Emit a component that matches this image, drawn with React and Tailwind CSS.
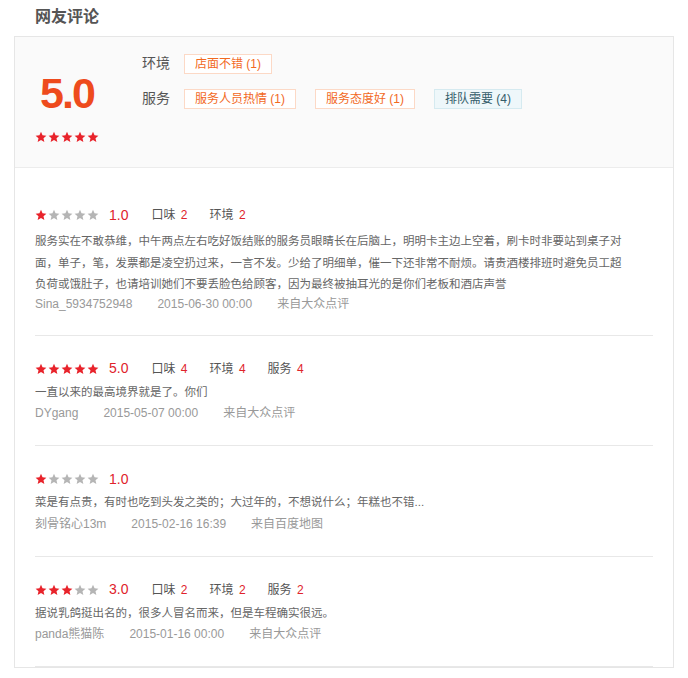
import React from "react";

const FONT = { fontFamily: '"Liberation Sans", Arial, "Noto Sans CJK SC", sans-serif' };

function Star({ on, size = 12 }) {
  return (
    <svg width={size} height={size} viewBox="0 0 24 24" className="block">
      <path
        d="M12 1.5l3.1 7.1 7.7.7-5.8 5.1 1.7 7.6L12 18l-6.7 4 1.7-7.6-5.8-5.1 7.7-.7z"
        fill={on ? "#e8232b" : "#b5b5b5"}
      />
    </svg>
  );
}

function Stars({ n, size = 12 }) {
  return (
    <div className="flex gap-[1px]">
      {[0, 1, 2, 3, 4].map((i) => (
        <Star key={i} on={i < n} size={size} />
      ))}
    </div>
  );
}

const reviews = [
  {
    stars: 1,
    score: "1.0",
    subs: [["口味", 2], ["环境", 2]],
    text: "服务实在不敢恭维，中午两点左右吃好饭结账的服务员眼睛长在后脑上，明明卡主边上空着，刷卡时非要站到桌子对面，单子，笔，发票都是凌空扔过来，一言不发。少给了明细单，催一下还非常不耐烦。请贵酒楼排班时避免员工超负荷或饿肚子，也请培训她们不要丢脸色给顾客，因为最终被抽耳光的是你们老板和酒店声誉",
    user: "Sina_5934752948",
    date: "2015-06-30 00:00",
    src: "来自大众点评",
    first: true,
  },
  {
    stars: 5,
    score: "5.0",
    subs: [["口味", 4], ["环境", 4], ["服务", 4]],
    text: "一直以来的最高境界就是了。你们",
    user: "DYgang",
    date: "2015-05-07 00:00",
    src: "来自大众点评",
  },
  {
    stars: 1,
    score: "1.0",
    subs: [],
    text: "菜是有点贵，有时也吃到头发之类的；大过年的，不想说什么；年糕也不错...",
    user: "刻骨铭心13m",
    date: "2015-02-16 16:39",
    src: "来自百度地图",
  },
  {
    stars: 3,
    score: "3.0",
    subs: [["口味", 2], ["环境", 2], ["服务", 2]],
    text: "据说乳鸽挺出名的，很多人冒名而来，但是车程确实很远。",
    user: "panda熊猫陈",
    date: "2015-01-16 00:00",
    src: "来自大众点评",
  },
];

function Tag({ children, blue }) {
  return (
    <span
      className={
        "inline-flex h-[20px] items-center px-[10px] text-[12px] border " +
        (blue
          ? "bg-[#eef7fa] border-[#d5eaf0] text-[#355d6a]"
          : "bg-white border-[#fcd9c6] text-[#f2691e]")
      }
    >
      {children}
    </span>
  );
}

export default function App() {
  return (
    <div className="w-[688px] h-[678px] bg-white overflow-hidden" style={FONT}>
      <div className="pl-[35px] pt-[6px] h-[36px] text-[16px] font-bold text-[#555] leading-[22px]">
        网友评论
      </div>
      <div className="ml-[14px] w-[660px] border border-[#e6e6e6]">
        <div className="h-[131px] bg-[#fafafa] border-b border-[#ececec] flex pl-[20px] pt-[16px]">
          <div className="w-[64px] flex flex-col items-center">
            <div className="text-[43px] leading-[42px] font-bold text-[#ee4b1d] mt-[19px] tracking-[-2px]">5.0</div>
            <div className="mt-[17px]">
              <Stars n={5} />
            </div>
          </div>
          <div className="ml-[43px] flex flex-col gap-[14px]">
            <div className="flex items-center">
              <span className="w-[42px] text-[14px] text-[#555]">环境</span>
              <Tag>店面不错 (1)</Tag>
            </div>
            <div className="flex items-center">
              <span className="w-[42px] text-[14px] text-[#555]">服务</span>
              <div className="flex gap-[19px]">
                <Tag>服务人员热情 (1)</Tag>
                <Tag>服务态度好 (1)</Tag>
                <Tag blue>排队需要 (4)</Tag>
              </div>
            </div>
          </div>
        </div>
        <div className="px-[20px] pt-[14px]">
          {reviews.map((r, i) => (
            <div key={i} className="py-[22px] border-b border-[#e8e8e8]">
              <div className="flex items-center h-[22px]">
                <Stars n={r.stars} />
                <span className="ml-[10px] text-[14px] text-[#e0232b]">{r.score}</span>
                <div className="flex ml-[23px] gap-[22px] text-[12px]">
                  {r.subs.map(([k, v]) => (
                    <span key={k} className="text-[#555]">
                      {k} <span className="text-[#e0232b] ml-[2px]">{v}</span>
                    </span>
                  ))}
                </div>
              </div>
              <div
                className={
                  "text-[11.5px] leading-[21.5px] text-[#666] pr-[26px] " +
                  (r.first ? "pt-[5px]" : "pt-[2px]")
                }
              >
                {r.text}
              </div>
              <div className={"flex items-center gap-[25px] text-[12px] text-[#999] " + (r.first ? "h-[17px]" : "h-[20px]")}>
                <span>{r.user}</span>
                <span>{r.date}</span>
                <span>{r.src}</span>
              </div>
            </div>
          ))}
        </div>
      </div>
    </div>
  );
}
